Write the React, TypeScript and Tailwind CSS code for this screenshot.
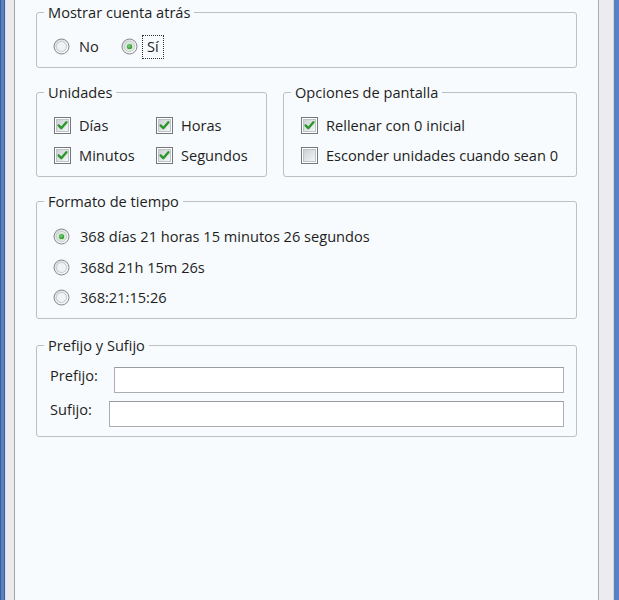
import React from "react";

function Radio({ checked }: { checked?: boolean }) {
  return (
    <svg width="17" height="17" viewBox="0 0 17 17" className="shrink-0">
      <defs>
        <linearGradient id="rbg" x1="0" y1="0" x2="1" y2="1">
          <stop offset="0" stopColor="#d3d6d9" />
          <stop offset="1" stopColor="#ffffff" />
        </linearGradient>
        <radialGradient id="rdot" cx="0.4" cy="0.4" r="0.7">
          <stop offset="0" stopColor="#7fd07f" />
          <stop offset="1" stopColor="#1f8a1f" />
        </radialGradient>
      </defs>
      <circle cx="8.5" cy="8.5" r="7.5" fill="url(#rbg)" stroke="#84888c" strokeWidth="1" />
      <circle cx="8.5" cy="8.5" r="5" fill="#f1f2f3" stroke="#c6c9cd" strokeWidth="1" />
      {checked && (
        <>
          <circle cx="8.5" cy="8.5" r="4" fill="#cdeacd" />
          <circle cx="8.5" cy="8.5" r="2.6" fill="url(#rdot)" />
        </>
      )}
    </svg>
  );
}

function Check({ checked }: { checked?: boolean }) {
  return (
    <svg width="17" height="17" viewBox="0 0 17 17" className="shrink-0">
      <defs>
        <linearGradient id="cbg" x1="0" y1="0" x2="1" y2="1">
          <stop offset="0" stopColor="#cbcfd2" />
          <stop offset="1" stopColor="#f5f7f8" />
        </linearGradient>
      </defs>
      <rect x="0.5" y="0.5" width="16" height="16" fill="#ffffff" stroke="#73777b" />
      <rect x="2.5" y="2.5" width="12" height="12" fill="url(#cbg)" stroke="#bfc3c7" />
      {checked && (
        <path d="M4.6 8.4 L7.3 11.2 L12.4 5.2" fill="none" stroke="#2b972b" strokeWidth="2.4" strokeLinecap="round" strokeLinejoin="round" />
      )}
    </svg>
  );
}

function Group({
  title,
  className = "",
  children,
}: {
  title: string;
  className?: string;
  children: React.ReactNode;
}) {
  return (
    <fieldset className={`rounded-[3px] border border-[#bdbfc2] p-0 m-0 ${className}`}>
      <legend className="ml-[7px] px-[4px] text-[14.6px] leading-[16px]">{title}</legend>
      {children}
    </fieldset>
  );
}

export default function App() {
  return (
    <div className="flex h-[600px] w-full overflow-hidden font-['Open_Sans',sans-serif] text-[#1e1e1e]">
      <div className="w-[1px] bg-[#3a5c98]" />
      <div className="w-[3px] bg-[#5a82c0]" />
      <div className="w-[1px] bg-[#3e609b]" />
      <div className="w-[1px] bg-[#dcdff0]" />
      <div className="w-[8px] bg-[#ebebee]" />
      <div className="w-[1px] bg-[#a3a5a8]" />

      <div className="flex flex-1 flex-col bg-[#f7fbfd] px-[21px] pt-[4px]">
        <Group title="Mostrar cuenta atrás">
          <div className="flex h-[17px] items-center pl-[16px] mt-[18px] mb-[12px] text-[14.6px]">
            <div className="flex w-[68px] items-center gap-[9px]">
              <Radio />
              <span>No</span>
            </div>
            <div className="flex items-center gap-[4px]">
              <Radio checked />
              <span className="flex h-[24px] items-center border border-dotted border-[#333] px-[4px]">Sí</span>
            </div>
          </div>
        </Group>

        <div className="mt-[16px] flex gap-[16px]">
          <Group title="Unidades" className="w-[231px]">
            <div className="mt-[17px] mb-[12px] flex flex-col gap-[13px] pl-[17px] text-[14.6px]">
              <div className="flex h-[17px] items-center">
                <div className="flex w-[102px] items-center gap-[8px]">
                  <Check checked />
                  <span>Días</span>
                </div>
                <div className="flex items-center gap-[8px]">
                  <Check checked />
                  <span>Horas</span>
                </div>
              </div>
              <div className="flex h-[17px] items-center">
                <div className="flex w-[102px] items-center gap-[8px]">
                  <Check checked />
                  <span>Minutos</span>
                </div>
                <div className="flex items-center gap-[8px]">
                  <Check checked />
                  <span>Segundos</span>
                </div>
              </div>
            </div>
          </Group>
          <Group title="Opciones de pantalla" className="flex-1">
            <div className="mt-[17px] mb-[12px] flex flex-col gap-[13px] pl-[17px] text-[14.6px]">
              <div className="flex h-[17px] items-center gap-[8px]">
                <Check checked />
                <span>Rellenar con 0 inicial</span>
              </div>
              <div className="flex h-[17px] items-center gap-[8px]">
                <Check />
                <span>Esconder unidades cuando sean 0</span>
              </div>
            </div>
          </Group>
        </div>

        <Group title="Formato de tiempo" className="mt-[16px]">
          <div className="mt-[19px] mb-[12px] flex flex-col pl-[16px] text-[14.6px]">
            <div className="flex h-[17px] items-center gap-[10px]">
              <Radio checked />
              <span>368 días 21 horas 15 minutos 26 segundos</span>
            </div>
            <div className="mt-[14px] flex h-[17px] items-center gap-[10px]">
              <Radio />
              <span>368d 21h 15m 26s</span>
            </div>
            <div className="mt-[13px] flex h-[17px] items-center gap-[10px]">
              <Radio />
              <span>368:21:15:26</span>
            </div>
          </div>
        </Group>

        <Group title="Prefijo y Sufijo" className="mt-[18px]">
          <div className="mt-[14px] mb-[9px] flex flex-col gap-[8px] pl-[13px] pr-[12px] text-[14.6px]">
            <div className="flex items-start">
              <span className="w-[64px] shrink-0 leading-[16px]">Prefijo:</span>
              <div className="h-[26px] flex-1 border border-[#abadb3] border-t-[#9a9ca2] bg-white" />
            </div>
            <div className="flex items-start">
              <span className="w-[59px] shrink-0 leading-[16px]">Sufijo:</span>
              <div className="h-[26px] flex-1 border border-[#abadb3] border-t-[#9a9ca2] bg-white" />
            </div>
          </div>
        </Group>
      </div>

      <div className="w-[1px] bg-[#a9abae]" />
      <div className="w-[14px] bg-[#ececef]" />
      <div className="w-[1px] bg-[#cfd5e4]" />
      <div className="w-[5px] bg-[#5a82c0]" />
    </div>
  );
}
